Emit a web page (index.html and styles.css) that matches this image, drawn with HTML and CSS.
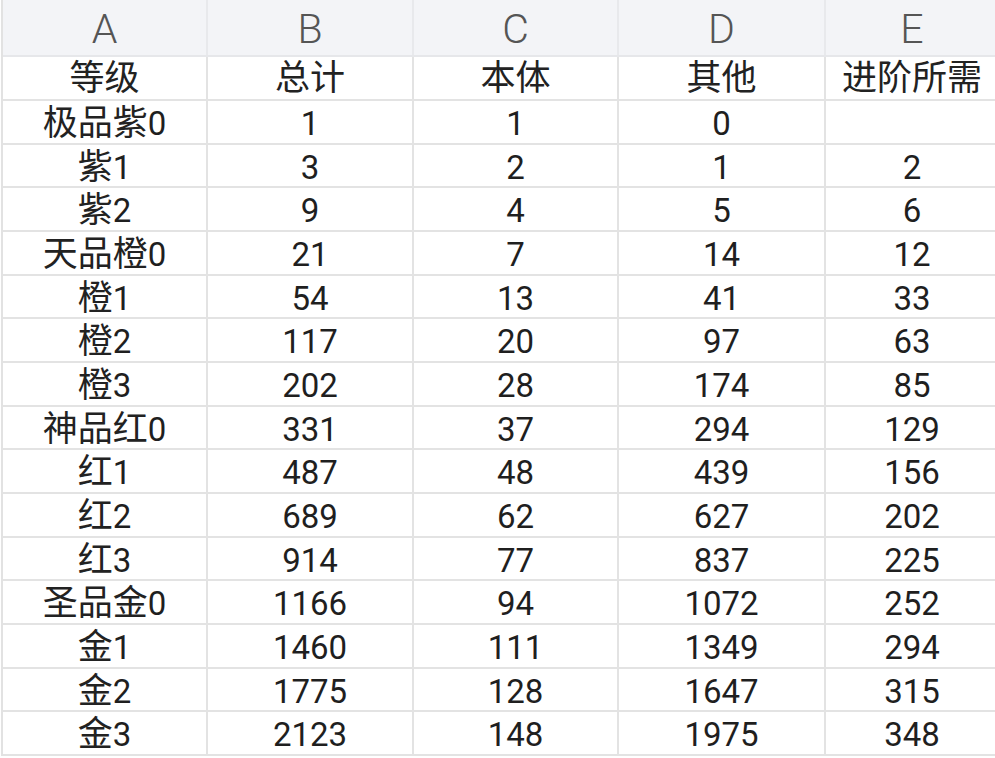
FILE: index.html
```html
<!DOCTYPE html>
<html lang="zh">
<head>
<meta charset="utf-8">
<link rel="stylesheet" href="styles.css">
</head>
<body>
<div class="sheet">
  <div class="row head">
    <div class="cell">A</div><div class="cell">B</div><div class="cell">C</div><div class="cell">D</div><div class="cell">E</div>
  </div>
  <div class="row title"><div class="cell"><span class="zh">等级</span></div><div class="cell"><span class="zh">总计</span></div><div class="cell"><span class="zh">本体</span></div><div class="cell"><span class="zh">其他</span></div><div class="cell"><span class="zh">进阶所需</span></div></div>
  <div class="row"><div class="cell"><span class="zh">极品紫</span>0</div><div class="cell">1</div><div class="cell">1</div><div class="cell">0</div><div class="cell"></div></div>
  <div class="row"><div class="cell"><span class="zh">紫</span>1</div><div class="cell">3</div><div class="cell">2</div><div class="cell">1</div><div class="cell">2</div></div>
  <div class="row"><div class="cell"><span class="zh">紫</span>2</div><div class="cell">9</div><div class="cell">4</div><div class="cell">5</div><div class="cell">6</div></div>
  <div class="row"><div class="cell"><span class="zh">天品橙</span>0</div><div class="cell">21</div><div class="cell">7</div><div class="cell">14</div><div class="cell">12</div></div>
  <div class="row"><div class="cell"><span class="zh">橙</span>1</div><div class="cell">54</div><div class="cell">13</div><div class="cell">41</div><div class="cell">33</div></div>
  <div class="row"><div class="cell"><span class="zh">橙</span>2</div><div class="cell">117</div><div class="cell">20</div><div class="cell">97</div><div class="cell">63</div></div>
  <div class="row"><div class="cell"><span class="zh">橙</span>3</div><div class="cell">202</div><div class="cell">28</div><div class="cell">174</div><div class="cell">85</div></div>
  <div class="row"><div class="cell"><span class="zh">神品红</span>0</div><div class="cell">331</div><div class="cell">37</div><div class="cell">294</div><div class="cell">129</div></div>
  <div class="row"><div class="cell"><span class="zh">红</span>1</div><div class="cell">487</div><div class="cell">48</div><div class="cell">439</div><div class="cell">156</div></div>
  <div class="row"><div class="cell"><span class="zh">红</span>2</div><div class="cell">689</div><div class="cell">62</div><div class="cell">627</div><div class="cell">202</div></div>
  <div class="row"><div class="cell"><span class="zh">红</span>3</div><div class="cell">914</div><div class="cell">77</div><div class="cell">837</div><div class="cell">225</div></div>
  <div class="row"><div class="cell"><span class="zh">圣品金</span>0</div><div class="cell">1166</div><div class="cell">94</div><div class="cell">1072</div><div class="cell">252</div></div>
  <div class="row"><div class="cell"><span class="zh">金</span>1</div><div class="cell">1460</div><div class="cell">111</div><div class="cell">1349</div><div class="cell">294</div></div>
  <div class="row"><div class="cell"><span class="zh">金</span>2</div><div class="cell">1775</div><div class="cell">128</div><div class="cell">1647</div><div class="cell">315</div></div>
  <div class="row"><div class="cell"><span class="zh">金</span>3</div><div class="cell">2123</div><div class="cell">148</div><div class="cell">1975</div><div class="cell">348</div></div>
</div>
</body>
</html>
```
FILE: styles.css
```css
html, body {
  margin: 0;
  padding: 0;
  background: #ffffff;
  overflow: hidden;
}
.sheet {
  width: 1010px;
  margin-left: 1px;
  font-family: Roboto, "Noto Sans CJK SC", sans-serif;
  color: #1f1f1f;
  border-left: 2px solid #e2e2e2;
}
.row {
  display: grid;
  grid-template-columns: 205px 206px 205px 207px 172px;
  height: 43.67px;
  border-bottom: 2px solid #e3e3e3;
  box-sizing: border-box;
}
.cell {
  display: block;
  text-align: center;
  border-right: 2px solid #e3e3e3;
  font-size: 33px;
  line-height: 36px;
  padding-top: 5px;
  box-sizing: border-box;
  white-space: nowrap;
}
.cell:last-child {
  border-right: none;
}
.zh {
  font-family: "Noto Sans CJK SC", sans-serif;
  font-size: 35px;
  line-height: 28px;
  color: #222222;
}
.head {
  height: 57px;
  background: #f3f4f7;
  border-bottom-color: #e6e7ea;
}
.head .cell {
  font-size: 41px;
  font-weight: 300;
  color: #555555;
  line-height: 48px;
  padding-top: 5px;
  border-right-color: #e8e9ec;
}
.title {
  height: 44px;
}
.title .cell {
  padding-top: 4px;
}
```
